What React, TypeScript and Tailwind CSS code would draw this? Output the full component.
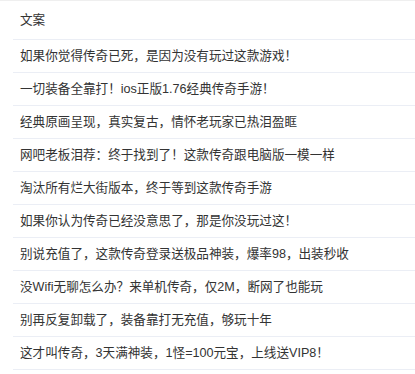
const rows = [
  "如果你觉得传奇已死，是因为没有玩过这款游戏！",
  "一切装备全靠打！ios正版1.76经典传奇手游！",
  "经典原画呈现，真实复古，情怀老玩家已热泪盈眶",
  "网吧老板泪荐：终于找到了！这款传奇跟电脑版一模一样",
  "淘汰所有烂大街版本，终于等到这款传奇手游",
  "如果你认为传奇已经没意思了，那是你没玩过这！",
  "别说充值了，这款传奇登录送极品神装，爆率98，出装秒收",
  "没Wifi无聊怎么办？来单机传奇，仅2M，断网了也能玩",
  "别再反复卸载了，装备靠打无充值，够玩十年",
  "这才叫传奇，3天满神装，1怪=100元宝，上线送VIP8！",
];

export default function App() {
  return (
    <div className="w-[415px] h-[374px] bg-white border-t border-[#efefef] font-['Liberation_Sans','Noto_Sans_CJK_SC',sans-serif] text-[12.6px] text-[#333]">
      <div className="ml-[13px]">
        <div className="h-[39px] flex items-center pl-[7px] border-b border-[#ebeef5]">文案</div>
        {rows.map((r) => (
          <div key={r} className="h-[33px] flex items-center pl-[7px] border-b border-[#ebeef5] whitespace-nowrap">
            {r}
          </div>
        ))}
      </div>
    </div>
  );
}
